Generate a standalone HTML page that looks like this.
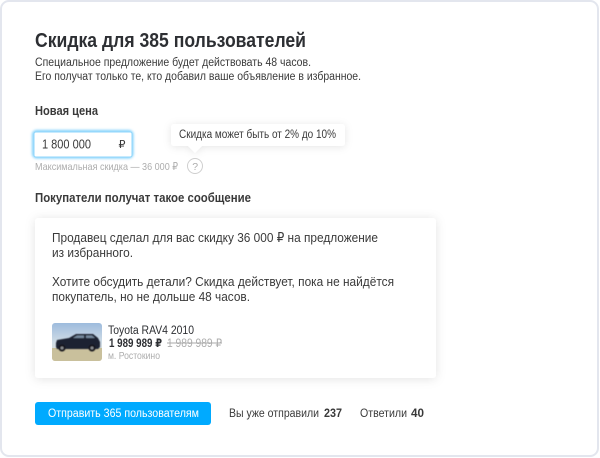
<!DOCTYPE html>
<html lang="ru">
<head>
<meta charset="utf-8">
<title>Скидка</title>
<style>
html,body{margin:0;padding:0;background:#fff;width:600px;height:458px;overflow:hidden}
svg{display:block;filter:blur(.3px)}
text{font-family:"Liberation Sans","DejaVu Sans",sans-serif;fill:#3a3a3a;font-size:11.5px}
.d{fill:#2d2f33}
.g{fill:#adadad}
.b{font-weight:700}
</style>
</head>
<body>
<svg width="600" height="458" viewBox="0 0 600 458" xmlns="http://www.w3.org/2000/svg">
<defs>
<filter id="s1" x="-10%" y="-10%" width="120%" height="125%"><feDropShadow dx="0" dy="1" stdDeviation="5" flood-color="#000" flood-opacity=".11"/></filter>
<filter id="s2" x="-10%" y="-30%" width="120%" height="170%"><feDropShadow dx="0" dy="1" stdDeviation="4" flood-color="#000" flood-opacity=".1"/></filter>
<filter id="gl" x="-10%" y="-30%" width="120%" height="160%"><feGaussianBlur stdDeviation="1.3"/></filter>
<filter id="pb" x="-5%" y="-5%" width="110%" height="110%"><feGaussianBlur stdDeviation=".6"/></filter>
<linearGradient id="sky" x1="0" y1="0" x2="0" y2="1"><stop offset="0" stop-color="#9dbbdd"/><stop offset=".5" stop-color="#cfdce6"/><stop offset="1" stop-color="#e0dccb"/></linearGradient>
<clipPath id="th"><rect x="52" y="323" width="50" height="38" rx="3"/></clipPath>
</defs>

<rect x="1" y="1" width="597" height="455" rx="8" fill="#fff" stroke="#e3e6ee" stroke-width="2"/>

<text x="35" y="47" class="d b" style="font-size:20px" textLength="271" lengthAdjust="spacingAndGlyphs">Скидка для 385 пользователей</text>
<text x="35" y="66" textLength="276" lengthAdjust="spacingAndGlyphs">Специальное предложение будет действовать 48 часов.</text>
<text x="35" y="80" textLength="326" lengthAdjust="spacingAndGlyphs">Его получат только те, кто добавил ваше объявление в избранное.</text>

<text x="35" y="115" class="b" style="font-size:12.500px" textLength="63" lengthAdjust="spacingAndGlyphs">Новая цена</text>

<rect x="33.500" y="131.500" width="98.500" height="25.500" rx="3" fill="none" stroke="#7fd0fb" stroke-width="3" filter="url(#gl)"/>
<rect x="34" y="132" width="98" height="25" rx="2" fill="#fff" stroke="#8fd6fb" stroke-width="1"/>
<text x="42" y="148.500" style="font-size:12.500px" textLength="49" lengthAdjust="spacingAndGlyphs">1 800 000</text>
<text x="118.500" y="148" style="font-size:11px">₽</text>

<text x="35" y="170" class="g" style="font-size:10.500px" textLength="143" lengthAdjust="spacingAndGlyphs">Максимальная скидка — 36 000 ₽</text>

<circle cx="195" cy="166" r="7.500" fill="#fff" stroke="#cfcfcf" stroke-width="1"/>
<text x="192.200" y="170" class="g" style="font-size:10.500px">?</text>

<g filter="url(#s2)">
<path d="M174 124H342a3 3 0 0 1 3 3V143a3 3 0 0 1-3 3H202L195 153L188 146H174a3 3 0 0 1-3-3V127a3 3 0 0 1 3-3Z" fill="#fff"/>
</g>
<text x="179" y="138" textLength="157" lengthAdjust="spacingAndGlyphs">Скидка может быть от 2% до 10%</text>

<text x="35" y="202" class="b" style="font-size:12.500px" textLength="216" lengthAdjust="spacingAndGlyphs">Покупатели получат такое сообщение</text>

<rect x="35" y="218" width="401" height="160" rx="3" fill="#fff" filter="url(#s1)"/>
<text x="52" y="242" style="font-size:13px" textLength="326" lengthAdjust="spacingAndGlyphs">Продавец сделал для вас скидку 36 000 ₽ на предложение</text>
<text x="52" y="257" style="font-size:13px" textLength="81" lengthAdjust="spacingAndGlyphs">из избранного.</text>
<text x="52" y="286" style="font-size:13px" textLength="342" lengthAdjust="spacingAndGlyphs">Хотите обсудить детали? Скидка действует, пока не найдётся</text>
<text x="52" y="301" style="font-size:13px" textLength="198" lengthAdjust="spacingAndGlyphs">покупатель, но не дольше 48 часов.</text>

<g clip-path="url(#th)">
<rect x="52" y="323" width="50" height="38" fill="url(#sky)"/>
<rect x="52" y="348" width="50" height="13" fill="#c9c09c"/>
<g filter="url(#pb)">
<path d="M56 343L57 340L69 338L76 334H93L98 338L100 342V347L98 349H57L56 347Z" fill="#1d2230"/>
<path d="M73 338L77 335.500H84V338ZM86 335.500H92L95 338H86Z" fill="#74889c"/>
<circle cx="62" cy="348" r="3.500" fill="#15171d"/>
<circle cx="62" cy="348" r="1.500" fill="#8a8d92"/>
<circle cx="92" cy="348" r="3.500" fill="#15171d"/>
<circle cx="92" cy="348" r="1.500" fill="#8a8d92"/>
</g>
</g>

<text x="108" y="334" style="font-size:11.500px" class="d" textLength="86" lengthAdjust="spacingAndGlyphs">Toyota RAV4 2010</text>
<text x="109" y="347" class="d" style="font-size:11.500px;font-weight:700" textLength="53" lengthAdjust="spacingAndGlyphs">1 989 989 ₽</text>
<text x="167" y="347" class="g" style="font-size:11.500px" textLength="55" lengthAdjust="spacingAndGlyphs">1 989 989 ₽</text>
<line x1="167" y1="343" x2="222" y2="343" stroke="#a9a9a9" stroke-width="1"/>
<text x="108" y="359" class="g" style="font-size:10px" textLength="52" lengthAdjust="spacingAndGlyphs">м. Ростокино</text>

<rect x="35" y="402" width="176" height="23" rx="3" fill="#00aaff"/>
<text x="48" y="417" style="fill:#fff;font-size:11.500px" textLength="151" lengthAdjust="spacingAndGlyphs">Отправить 365 пользователям</text>
<text x="229" y="417" textLength="90" lengthAdjust="spacingAndGlyphs">Вы уже отправили</text>
<text x="324" y="417" class="b" textLength="18" lengthAdjust="spacingAndGlyphs">237</text>
<text x="360" y="417" textLength="47" lengthAdjust="spacingAndGlyphs">Ответили</text>
<text x="411" y="417" class="b" textLength="13" lengthAdjust="spacingAndGlyphs">40</text>
</svg>
</body>
</html>
